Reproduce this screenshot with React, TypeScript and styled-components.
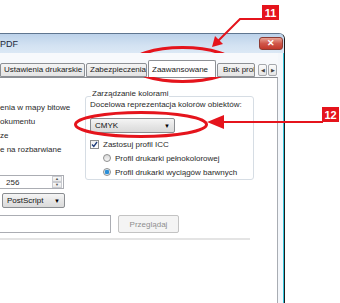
import React from "react";
import styled, { createGlobalStyle } from "styled-components";

const Global = createGlobalStyle`
  html, body { margin: 0; padding: 0; background: #ffffff; }
  body { font-family: "Liberation Sans", Arial, sans-serif; }
`;

const Page = styled.div`
  position: relative;
  width: 340px;
  height: 303px;
  overflow: hidden;
  background: #ffffff;
  font-family: "Liberation Sans", Arial, sans-serif;
  font-size: 8px;
  color: #2a2a2a;
`;

const Window = styled.div`
  margin-top: 33px;
  width: 284px;
  height: 270px;
  display: flex;
  flex-direction: column;
  border-top: 1px solid #5f7690;
  border-right: 1px solid #1c1c1c;
  border-top-right-radius: 6px;
  background: #eef3f8;
  overflow: hidden;
`;

const TitleBar = styled.div`
  height: 19px;
  display: flex;
  align-items: flex-start;
  justify-content: space-between;
  padding-right: 1px;
  background: linear-gradient(#bcd2ea, #d3e2f2 60%, #dbe8f5);
`;

const Title = styled.span`
  font-size: 9px;
  line-height: 20px;
  color: #1d2a3a;
`;

const CloseButton = styled.div`
  margin-top: 3px;
  width: 24px;
  height: 13px;
  border: 1px solid #8c3b33;
  border-radius: 3px;
  background: linear-gradient(#e8a496, #d0574a 50%, #c2392b);
  display: flex;
  align-items: center;
  justify-content: center;
  color: #fff;
  font-size: 9px;
  font-weight: bold;
  line-height: 1;
  box-sizing: border-box;
`;

const Client = styled.div`
  flex: 1;
  display: flex;
  flex-direction: column;
  border-right: 1px solid #34c6dc;
  padding-right: 5px;
  background: #f4f7fb;
`;

const TabStrip = styled.div`
  height: 24px;
  display: flex;
  align-items: flex-end;
  position: relative;
  z-index: 1;
  background: #f7f9fc;
`;

const Tabs = styled.div`
  flex: 1;
  display: flex;
  align-items: flex-end;
  gap: 1px;
  overflow: hidden;
  height: 100%;
`;

const Tab = styled.div<{ $w: number; $active?: boolean }>`
  flex: none;
  box-sizing: border-box;
  width: ${(p) => p.$w}px;
  height: ${(p) => (p.$active ? 18 : 14)}px;
  margin-bottom: ${(p) => (p.$active ? -1 : 0)}px;
  border: 1px solid #8d9095;
  border-bottom: ${(p) => (p.$active ? "none" : "1px solid #8d9095")};
  border-radius: 2px 2px 0 0;
  background: ${(p) => (p.$active ? "#ffffff" : "linear-gradient(#f4f4f4, #e4e4e4)")};
  display: flex;
  align-items: center;
  gap: 2px;
  padding: 0 3px;
  overflow: hidden;
  white-space: nowrap;
  font-size: 8px;
  line-height: 12px;
  color: #1a1a1a;
`;

const ScrollButtons = styled.div`
  display: flex;
  gap: 1px;
  margin: 0 1px 1px 2px;
`;

const ScrollButton = styled.div`
  width: 9px;
  height: 12px;
  box-sizing: border-box;
  border: 1px solid #a5a8ad;
  border-radius: 2px;
  background: linear-gradient(#fbfbfb, #e6e6e6);
  display: flex;
  align-items: center;
  justify-content: center;
  font-size: 5px;
  color: #444;
`;

const Panel = styled.div`
  flex: 1;
  display: flex;
  flex-direction: column;
  background: #ffffff;
  border-top: 1px solid #8d9095;
  border-right: 1px solid #a9adb3;
`;

const TopSection = styled.div`
  display: flex;
  align-items: flex-start;
`;

const LeftColumn = styled.div`
  width: 85px;
  padding-top: 23px;
  display: flex;
  flex-direction: column;
  align-items: flex-start;
`;

const OptionLine = styled.div`
  height: 14px;
  line-height: 14px;
  white-space: nowrap;
`;

const Spinner = styled.div`
  margin-top: 18px;
  width: 64px;
  height: 14px;
  box-sizing: border-box;
  border: 1px solid #abadb3;
  border-left: none;
  display: flex;
  align-items: center;
  justify-content: space-between;
  padding-left: 6px;
`;

const SpinButtons = styled.div`
  width: 10px;
  height: 12px;
  display: flex;
  flex-direction: column;
  margin-right: 1px;
`;

const SpinButton = styled.div`
  flex: 1;
  border: 1px solid #c9cbd0;
  background: linear-gradient(#f9f9f9, #e8e8e8);
  font-size: 4px;
  color: #555;
  display: flex;
  align-items: center;
  justify-content: center;
  line-height: 1;
`;

const Select = styled.div<{ $w: number }>`
  width: ${(p) => p.$w}px;
  height: 15px;
  box-sizing: border-box;
  border: 1px solid #8a8d91;
  border-radius: 2px;
  background: linear-gradient(#f5f5f5, #e6e6e6 50%, #dadada);
  display: flex;
  align-items: center;
  justify-content: space-between;
  padding: 0 4px 0 4px;
  font-size: 8px;
  color: #111;
`;

const PsSelect = styled(Select)`
  margin-top: 4px;
  margin-left: 2px;
`;

const Arrow = styled.span`
  font-size: 6px;
  color: #000;
`;

const GroupBox = styled.div`
  position: relative;
  margin-top: 18px;
  width: 169px;
  height: 84px;
  box-sizing: border-box;
  border: 1px solid #d6dde4;
  border-radius: 3px;
  padding: 3px 0 0 4px;
  display: flex;
  flex-direction: column;
`;

const Legend = styled.span`
  position: absolute;
  top: -8px;
  left: 5px;
  padding: 0 1px;
  background: #ffffff;
  line-height: 10px;
  white-space: nowrap;
`;

const GroupLabel = styled.div`
  line-height: 10px;
  white-space: nowrap;
  margin-bottom: 8px;
`;

const CheckRow = styled.div<{ $indent?: number }>`
  height: 14px;
  display: flex;
  align-items: center;
  gap: 4px;
  padding-left: ${(p) => p.$indent ?? 0}px;
  white-space: nowrap;
`;

const FirstCheckRow = styled(CheckRow)`
  margin-top: 4px;
`;

const CheckBox = styled.span`
  width: 9px;
  height: 9px;
  box-sizing: border-box;
  border: 1px solid #8e8f8f;
  background: linear-gradient(#f0f0f0, #ffffff);
  display: flex;
  align-items: center;
  justify-content: center;
`;

const Radio = styled.span<{ $on?: boolean }>`
  width: 8px;
  height: 8px;
  box-sizing: border-box;
  border-radius: 50%;
  border: 1px solid #8e8f8f;
  background: ${(p) =>
    p.$on
      ? "radial-gradient(circle, #2b8fd8 0 2px, #d8e8f4 2.5px)"
      : "linear-gradient(#d9d9d9, #f6f6f6)"};
`;

const FileRow = styled.div`
  margin-top: 7px;
  display: flex;
  gap: 7px;
  align-items: center;
`;

const FileInput = styled.div`
  width: 111px;
  height: 18px;
  box-sizing: border-box;
  border: 1px solid #abadb3;
  border-left: none;
`;

const BrowseButton = styled.div`
  width: 61px;
  height: 18px;
  box-sizing: border-box;
  border: 1px solid #c3c3c3;
  border-radius: 2px;
  background: #f4f4f4;
  color: #8e8e8e;
  display: flex;
  align-items: center;
  justify-content: center;
`;

const Separator = styled.div`
  margin-top: 5px;
  width: 250px;
  height: 2px;
  background: #e4e4e4;
`;

const Overlay = styled.svg`
  position: absolute;
  left: 0;
  top: 0;
  pointer-events: none;
`;

const RED = "#e5141c";

function Annotations() {
  return (
    <Overlay width={340} height={303} viewBox="0 0 340 303">
      <ellipse cx={182.5} cy={64.5} rx={51.5} ry={17} fill="none" stroke={RED} strokeWidth={3} />
      <ellipse cx={141} cy={124.5} rx={65.5} ry={12} fill="none" stroke={RED} strokeWidth={3} />
      <polyline points="263,19 240,19 218,41" fill="none" stroke={RED} strokeWidth={2} />
      <polygon points="212,47 215,36 223,44" fill={RED} />
      <line x1={323} y1={122} x2={222} y2={122} stroke={RED} strokeWidth={2} />
      <polygon points="207,122 224,115 224,129" fill={RED} />
      <rect x={262} y={5} width={17} height={15} fill={RED} />
      <text x={270.5} y={16.5} textAnchor="middle" fill="#fff" fontSize={11} fontWeight="bold" fontFamily="Liberation Sans, Arial, sans-serif">11</text>
      <rect x={322} y={107} width={17} height={15} fill={RED} />
      <text x={330.5} y={118.5} textAnchor="middle" fill="#fff" fontSize={11} fontWeight="bold" fontFamily="Liberation Sans, Arial, sans-serif">12</text>
    </Overlay>
  );
}

function BackIcon() {
  return (
    <svg width={9} height={9} viewBox="0 0 9 9">
      <path d="M1 7 Q2 2 7 2" fill="none" stroke="#3a3a3a" strokeWidth={1.2} />
      <path d="M6 0.5 L8.5 2 L6 3.8" fill="none" stroke="#3a3a3a" strokeWidth={1} />
    </svg>
  );
}

export default function App() {
  return (
    <>
      <Global />
      <Page>
        <Window>
          <TitleBar>
            <Title>PDF</Title>
            <CloseButton>✕</CloseButton>
          </TitleBar>
          <Client>
            <TabStrip>
              <Tabs>
                <Tab $w={85}>Ustawienia drukarskie</Tab>
                <Tab $w={61}>Zabezpieczenia</Tab>
                <Tab $w={68} $active>Zaawansowane</Tab>
                <Tab $w={38}>
                  <BackIcon />
                  Brak problemów
                </Tab>
              </Tabs>
              <ScrollButtons>
                <ScrollButton>◀</ScrollButton>
                <ScrollButton>▶</ScrollButton>
              </ScrollButtons>
            </TabStrip>
            <Panel>
              <TopSection>
                <LeftColumn>
                  <OptionLine>enia w mapy bitowe</OptionLine>
                  <OptionLine>okumentu</OptionLine>
                  <OptionLine>ze</OptionLine>
                  <OptionLine>e na rozbarwiane</OptionLine>
                  <Spinner>
                    <span>256</span>
                    <SpinButtons>
                      <SpinButton>▲</SpinButton>
                      <SpinButton>▼</SpinButton>
                    </SpinButtons>
                  </Spinner>
                  <PsSelect $w={63}>
                    <span>PostScript</span>
                    <Arrow>▼</Arrow>
                  </PsSelect>
                </LeftColumn>
                <GroupBox>
                  <Legend>Zarządzanie kolorami</Legend>
                  <GroupLabel>Docelowa reprezentacja kolorów obiektów:</GroupLabel>
                  <Select $w={85}>
                    <span>CMYK</span>
                    <Arrow>▼</Arrow>
                  </Select>
                  <FirstCheckRow>
                    <CheckBox>
                      <svg width={7} height={7} viewBox="0 0 7 7">
                        <path d="M1 3.5 L2.8 5.5 L6 1" fill="none" stroke="#1f3d7a" strokeWidth={1.3} />
                      </svg>
                    </CheckBox>
                    Zastosuj profil ICC
                  </FirstCheckRow>
                  <CheckRow $indent={13}>
                    <Radio />
                    Profil drukarki pełnokolorowej
                  </CheckRow>
                  <CheckRow $indent={13}>
                    <Radio $on />
                    Profil drukarki wyciągów barwnych
                  </CheckRow>
                </GroupBox>
              </TopSection>
              <FileRow>
                <FileInput />
                <BrowseButton>Przeglądaj</BrowseButton>
              </FileRow>
              <Separator />
            </Panel>
          </Client>
        </Window>
        <Annotations />
      </Page>
    </>
  );
}
